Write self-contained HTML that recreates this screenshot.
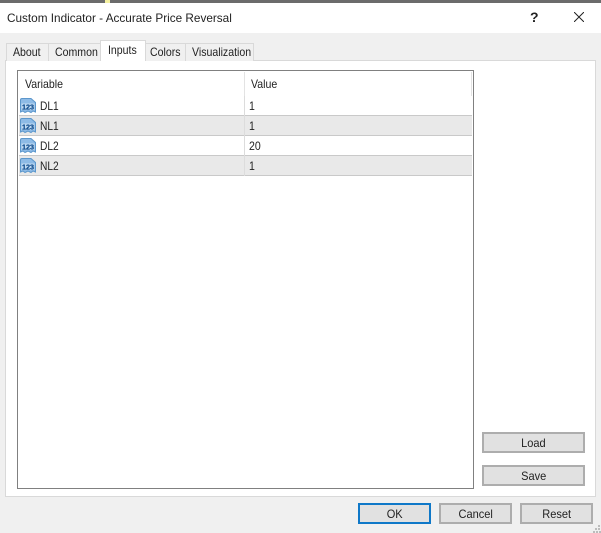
<!DOCTYPE html>
<html>
<head>
<meta charset="utf-8">
<style>
html,body{margin:0;padding:0;}
body{width:601px;height:533px;overflow:hidden;background:#f0f0f0;position:relative;font-family:"Liberation Sans",sans-serif;font-size:12px;color:#222;}
div{position:absolute;box-sizing:border-box;}
.t{white-space:nowrap;line-height:14px;transform:scaleX(.88);transform-origin:0 50%;}
.btn{background:#e1e1e1;border:2px solid #adadad;text-align:center;font-size:12px;color:#222;}
.btn span{display:inline-block;transform:scaleX(.92);}
.tab{background:#f0f0f0;border:1px solid #d9d9d9;border-bottom:none;top:43px;height:18px;}
svg{position:absolute;}
</style>
</head>
<body>
<div style="left:0;top:0;width:601px;height:3px;background:#6b6b6b"></div>
<div style="left:105px;top:0;width:5px;height:3px;background:#f4f0a0"></div>
<div style="left:0;top:3px;width:601px;height:30px;background:#fff"></div>
<div class="t" style="left:7px;top:11px;transform:scaleX(.98)">Custom Indicator - Accurate Price Reversal</div>
<div class="t" style="left:530px;top:10px;font-size:14px;font-weight:bold;transform:none">?</div>
<svg style="left:574px;top:12px" width="10" height="10" viewBox="0 0 10 10"><path d="M0 0L10 10M10 0L0 10" stroke="#222" stroke-width="1" fill="none"/></svg>

<div style="left:5px;top:60px;width:591px;height:437px;background:#fff;border:1px solid #d9d9d9"></div>

<div class="tab" style="left:6px;width:43px"></div>
<div class="tab" style="left:48px;width:53px"></div>
<div class="tab" style="left:145px;width:41px"></div>
<div class="tab" style="left:185px;width:69px"></div>
<div style="left:100px;top:40px;width:46px;height:21px;background:#fff;border:1px solid #d9d9d9;border-bottom:none"></div>
<div class="t" style="left:13px;top:45px">About</div>
<div class="t" style="left:55px;top:45px">Common</div>
<div class="t" style="left:108px;top:43px">Inputs</div>
<div class="t" style="left:150px;top:45px">Colors</div>
<div class="t" style="left:192px;top:45px">Visualization</div>

<div style="left:17px;top:70px;width:457px;height:419px;background:#fff;border:1px solid #808080"></div>
<div style="left:244px;top:72px;width:1px;height:103px;background:#e3e3e3"></div>
<div style="left:471px;top:72px;width:1px;height:24px;background:#e3e3e3"></div>
<div class="t" style="left:25px;top:77px">Variable</div>
<div class="t" style="left:251px;top:77px">Value</div>

<div style="left:19px;top:115px;width:453px;height:21px;background:#e9e9e9;border-top:1px solid #c9c9c9;border-bottom:1px solid #c9c9c9"></div>
<div style="left:19px;top:155px;width:453px;height:21px;background:#e9e9e9;border-top:1px solid #c9c9c9;border-bottom:1px solid #c9c9c9"></div>
<div style="left:244px;top:96px;width:1px;height:80px;background:#dcdcdc"></div>

<svg style="left:20px;top:98px" width="16" height="16" viewBox="0 0 16 16"><path d="M0.5 2Q0.5 0.5 2 0.5H11L15.5 4.5V14L13 13L11 14.5L8 13L5 14.5L3 13L0.5 14Z" fill="#8ebbe6" stroke="#5c97cc"/><rect x="1.5" y="5.5" width="13" height="6.5" fill="#c2dbf2"/><text x="2" y="11.5" font-size="7" font-weight="bold" fill="#124f90" stroke="#124f90" stroke-width=".25" textLength="12" lengthAdjust="spacingAndGlyphs" font-family="Liberation Sans">123</text></svg>
<svg style="left:20px;top:118px" width="16" height="16" viewBox="0 0 16 16"><path d="M0.5 2Q0.5 0.5 2 0.5H11L15.5 4.5V14L13 13L11 14.5L8 13L5 14.5L3 13L0.5 14Z" fill="#8ebbe6" stroke="#5c97cc"/><rect x="1.5" y="5.5" width="13" height="6.5" fill="#c2dbf2"/><text x="2" y="11.5" font-size="7" font-weight="bold" fill="#124f90" stroke="#124f90" stroke-width=".25" textLength="12" lengthAdjust="spacingAndGlyphs" font-family="Liberation Sans">123</text></svg>
<svg style="left:20px;top:138px" width="16" height="16" viewBox="0 0 16 16"><path d="M0.5 2Q0.5 0.5 2 0.5H11L15.5 4.5V14L13 13L11 14.5L8 13L5 14.5L3 13L0.5 14Z" fill="#8ebbe6" stroke="#5c97cc"/><rect x="1.5" y="5.5" width="13" height="6.5" fill="#c2dbf2"/><text x="2" y="11.5" font-size="7" font-weight="bold" fill="#124f90" stroke="#124f90" stroke-width=".25" textLength="12" lengthAdjust="spacingAndGlyphs" font-family="Liberation Sans">123</text></svg>
<svg style="left:20px;top:158px" width="16" height="16" viewBox="0 0 16 16"><path d="M0.5 2Q0.5 0.5 2 0.5H11L15.5 4.5V14L13 13L11 14.5L8 13L5 14.5L3 13L0.5 14Z" fill="#8ebbe6" stroke="#5c97cc"/><rect x="1.5" y="5.5" width="13" height="6.5" fill="#c2dbf2"/><text x="2" y="11.5" font-size="7" font-weight="bold" fill="#124f90" stroke="#124f90" stroke-width=".25" textLength="12" lengthAdjust="spacingAndGlyphs" font-family="Liberation Sans">123</text></svg>

<div class="t" style="left:40px;top:99px;transform:scaleX(.85)">DL1</div>
<div class="t" style="left:40px;top:119px;transform:scaleX(.85)">NL1</div>
<div class="t" style="left:40px;top:139px;transform:scaleX(.85)">DL2</div>
<div class="t" style="left:40px;top:159px;transform:scaleX(.85)">NL2</div>
<div class="t" style="left:249px;top:99px">1</div>
<div class="t" style="left:249px;top:119px">1</div>
<div class="t" style="left:249px;top:139px">20</div>
<div class="t" style="left:249px;top:159px">1</div>

<div class="btn" style="left:482px;top:432px;width:103px;height:21px;line-height:19px"><span>Load</span></div>
<div class="btn" style="left:482px;top:465px;width:103px;height:21px;line-height:18px"><span>Save</span></div>
<div class="btn" style="left:358px;top:503px;width:73px;height:21px;line-height:19px;border-color:#0f78c8"><span>OK</span></div>
<div class="btn" style="left:439px;top:503px;width:73px;height:21px;line-height:19px"><span>Cancel</span></div>
<div class="btn" style="left:520px;top:503px;width:73px;height:21px;line-height:19px"><span>Reset</span></div>

<svg style="left:593px;top:525px" width="8" height="8" viewBox="0 0 8 8"><g fill="#bcbcbc"><rect x="5" y="0" width="2" height="2"/><rect x="2" y="3" width="2" height="2"/><rect x="5" y="3" width="2" height="2"/><rect x="0" y="6" width="2" height="2"/><rect x="3" y="6" width="2" height="2"/><rect x="6" y="6" width="2" height="2"/></g></svg>
</body>
</html>
